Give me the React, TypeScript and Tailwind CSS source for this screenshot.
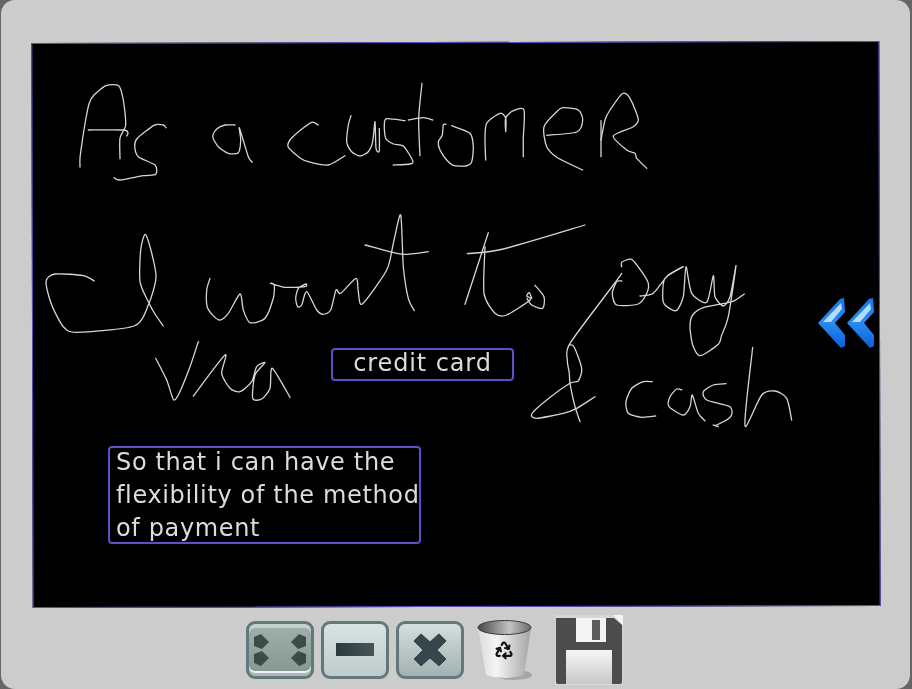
import { Recycle } from "lucide-react";

const strokes: string[] = [
  "80,167 80,158 82.7,138 86,118 89.3,103 94,95 106,85.7 118.7,85.7 123.3,100 125.7,125 120,138 120,158.7",
  "88.3,130 123.3,130 128,133 126.7,136",
  "166,127.7 163.3,125 154,125.3 137.3,138.3 134.7,146 138.3,156.7 155,165 155.7,174.3 143.3,175.7 120,180 114,177.7",
  "235,125 225,125 216.7,129 212.7,136.7 218.3,146.7 228.3,153.3 238.3,152.7 240.7,140 239.3,127.7 248.3,156.7 252.3,162.3",
  "318.3,125 311.7,122.3 300,130.5 290,140 288.3,147.3 300,158 308.3,161.7 328.3,165 345,155.7",
  "351,115.7 348.3,125 346.7,141.7 351.7,151.7 360,156 368.3,151.7 372.7,141.7 375,121.7 376,148.3 379.3,150.7 379.3,128.3",
  "405,120.7 386.7,118.7 384.3,125 385.7,138.3 393.3,144 403.3,146 412.7,160.7 410,164 393.3,165",
  "422,83.3 418.7,118.3 420,155.7",
  "408.3,120 423.3,117.7 432.7,120",
  "446,124.3 443.3,125 442.3,135 438.3,141.7 440,150 446.7,160 453.3,165.3 465.7,166 471.7,161.7 473.3,146.7 470,133.3 451.7,125.7",
  "485.7,160 485,140 486.7,123.3 500,113.3 505.7,118.3 505.7,131.7 505.7,118 513.3,110.7 524,110 523.3,138.3 523.3,156.7",
  "546.7,135.3 576.7,132 582.7,120 578.3,110 563.3,107.7 556.7,111.7 544,126.7 546.7,146.7 558.3,158.3 582.7,170",
  "601,120.7 601,156.7",
  "601,140 605,120 610,110 622.3,93.7 630,98.3 638.3,119.3 633.3,126.7 613.3,136 626.7,150 635,153.3 636.7,158.3 646.7,168.3",
  "94.3,281 83.3,275.7 55,274 46,281.7 51.7,305 63.3,326.7 76.7,332.3 134,326 148.3,305 156,276.7 150,246.7 145,234.3 140.7,250 140,281.7 148.3,301.7 155,314 163.3,326",
  "210,278.3 206.7,290 207.7,308.3 219,320 228.3,313.3 240,294 243.3,310 250,322.7 265,318.3 273.3,298.3 274.3,285 270.7,283.3 285,287.3 305,286.7 306,284 298.3,288.3 295.7,298.3 297.7,306.7 301.7,305 306.7,291.7 316.7,310 323.3,314.3 330.7,310 336,290 340.7,293.3 356,278.3 358.3,291.7 362.3,304 386.7,270 393.3,243.3 400.7,215 403.3,266.7 408.3,298.3 414.3,310.7",
  "365,245 390,251.7 405,254.3 428.3,251.7",
  "155.7,358.3 166.7,380 173.3,399.3 178.3,395 190,366.7 198.3,341.7",
  "193.3,396 225,355 221.7,373.3 230,388.3 240,391.7 251.7,381.7 256.7,366.7 265,362.7 255,375 252.7,398.3 261.7,399 270,388.3 272.3,368.3 290,397.3",
  "488.3,232.7 465,304.3",
  "467.3,253.7 503.3,249 585,225",
  "485,246.7 484,293.3 495,313.3 506.7,315 530,300 526.7,296 529.3,292.7 531.7,298.3",
  "535,285.3 544,296.7 542.7,308.3 531.7,305 527,298.3",
  "621.7,273.3 613.3,285 570,343.3 567.3,360 569.3,373.3 570,383.3 575,406.7 580,421.7",
  "569.3,345 574,346.7 581.7,368.3 578.3,381 570,383.3 546.7,400 531.7,414 536.7,418.3 563.3,413.3 576.7,408.3 595,396.7",
  "621.7,266.7 621.7,262.3 631.7,259.3 641.7,271.7 648.3,283.3 646.7,293.3 638.3,304 616.7,305 612.3,293.3 616.7,281.7 621.7,281",
  "640,296 653.3,293.3 668.3,275 683.3,266.7 665,278.3 662.7,296.7 665,305 676,310.7 683.3,296.7 686,266.7 691.7,293.3 706.7,302.3 713.3,275.7 715,296.7 723.3,306 730,296.7 736,265.7 728.3,316.7 721.7,335 718.3,344.3 700,355.7 692.7,345 690,326.7 692.7,315 703.3,307.7 731.7,301.7 744.3,294",
  "652.3,381.7 643.3,381.7 631.7,388.3 626,401.7 628.3,413.3 641.7,417.3 655.7,416",
  "681.7,390 676.7,389 670,396.7 669,406.7 683.3,415 690,406.7 692.3,395 698.3,413.3 705,420.7",
  "726,383.7 713.3,385 703.3,391.7 706.7,400 730,406.7 730.7,416.7 716.7,425 713.3,425 718.3,426.7",
  "752.7,347.3 746.7,400 745.7,426.7 761.7,395 775,391 786.7,398.3 791.7,420",
];

// Catmull-Rom smoothing with low tension so that sharp pen turns stay sharp
function smooth(line: string): string {
  const p = line.split(" ").map((s) => s.split(",").map(Number));
  let d = `M${p[0][0]} ${p[0][1]}`;
  const k = 1 / 8;
  for (let i = 0; i < p.length - 1; i++) {
    const a = p[Math.max(i - 1, 0)];
    const b = p[i];
    const c = p[i + 1];
    const e = p[Math.min(i + 2, p.length - 1)];
    const c1x = b[0] + (c[0] - a[0]) * k;
    const c1y = b[1] + (c[1] - a[1]) * k;
    const c2x = c[0] - (e[0] - b[0]) * k;
    const c2y = c[1] - (e[1] - b[1]) * k;
    d += ` C${c1x.toFixed(1)} ${c1y.toFixed(1)} ${c2x.toFixed(1)} ${c2y.toFixed(1)} ${c[0]} ${c[1]}`;
  }
  return d;
}

function Handwriting() {
  return (
    <svg className="absolute inset-0 w-full h-full" viewBox="31 42 849 565" fill="none">
      {strokes.map((p, i) => (
        <path key={i} d={smooth(p)} stroke="#d6d6d6" strokeWidth="1.3" strokeLinejoin="round" strokeLinecap="round" />
      ))}
    </svg>
  );
}

function Chevrons() {
  const shape = (dx: number) =>
    `${818 + dx},323 ${840 + dx},299 ${844 + dx},298 ${845 + dx},312 ${835 + dx},323 ${845 + dx},335 ${845 + dx},346 ${841 + dx},348`;
  const shine = (dx: number) =>
    `${823 + dx},322 ${841 + dx},303 ${842 + dx},309 ${831 + dx},322`;
  return (
    <svg className="absolute left-[785px] top-[254px] w-[64px] h-[54px] blur-[0.4px]" viewBox="816 296 64 54">
      <defs>
        <linearGradient id="chev" x1="0" y1="0" x2="0" y2="1">
          <stop offset="0" stopColor="#1a78e6" />
          <stop offset="0.5" stopColor="#2a8af4" />
          <stop offset="1" stopColor="#0a5fd8" />
        </linearGradient>
      </defs>
      <polygon points={shape(0)} fill="url(#chev)" />
      <polygon points={shine(0)} fill="#b4dcff" />
      <polygon points={shape(29)} fill="url(#chev)" />
      <polygon points={shine(29)} fill="#b4dcff" />
    </svg>
  );
}

function GlyphExpand() {
  return (
    <svg width="52" height="32" viewBox="0 0 52 32" className="blur-[0.4px]">
      <path d="M0 3 L7 0 L15 8 L8 15 L0 12 Z" fill="#3c4a4a" />
      <path d="M52 3 L45 0 L37 8 L44 15 L52 12 Z" fill="#3c4a4a" />
      <path d="M0 29 L7 32 L15 24 L8 17 L0 20 Z" fill="#3c4a4a" />
      <path d="M52 29 L45 32 L37 24 L44 17 L52 20 Z" fill="#3c4a4a" />
    </svg>
  );
}

function GlyphMinus() {
  return (
    <svg width="38" height="14" viewBox="0 0 38 14" className="blur-[0.3px]">
      <defs>
        <linearGradient id="bar" x1="0" y1="0" x2="1" y2="0">
          <stop offset="0" stopColor="#2c3a3c" />
          <stop offset="1" stopColor="#465658" />
        </linearGradient>
      </defs>
      <rect x="0" y="0" width="38" height="13" fill="url(#bar)" />
    </svg>
  );
}

function GlyphClose() {
  return (
    <svg width="36" height="36" viewBox="0 0 36 36" className="blur-[0.3px]">
      <path d="M9 1 L18 9 L27 1 L35 9 L26 18 L35 27 L27 35 L18 27 L9 35 L1 27 L10 18 L1 9 Z" fill="#36464a" stroke="#e2e8e8" strokeWidth="0.6" />
    </svg>
  );
}

function Trash() {
  return (
    <svg width="56" height="66" viewBox="0 0 56 66" className="blur-[0.3px]">
      <defs>
        <linearGradient id="can" x1="0" y1="0" x2="1" y2="0">
          <stop offset="0" stopColor="#dcdcdc" />
          <stop offset="0.35" stopColor="#f4f4f4" />
          <stop offset="1" stopColor="#a4a4a4" />
        </linearGradient>
        <linearGradient id="canIn" x1="0" y1="0" x2="1" y2="0">
          <stop offset="0" stopColor="#484848" />
          <stop offset="0.6" stopColor="#c4c4c4" />
          <stop offset="1" stopColor="#6a6a6a" />
        </linearGradient>
      </defs>
      <ellipse cx="37" cy="58" rx="18" ry="5" fill="#a6a6a6" />
      <path d="M1 11 L9 58 Q27 64 47 58 L54 11 Z" fill="url(#can)" />
      <ellipse cx="27.5" cy="10.5" rx="26.5" ry="7" fill="url(#canIn)" stroke="#3a3a3a" strokeWidth="1" />
    </svg>
  );
}

function Floppy() {
  return (
    <svg width="68" height="70" viewBox="0 0 68 70" className="blur-[0.3px]">
      <defs>
        <linearGradient id="flop" x1="0" y1="0" x2="0" y2="1">
          <stop offset="0" stopColor="#f6f6f6" />
          <stop offset="1" stopColor="#c8c8c8" />
        </linearGradient>
      </defs>
      <rect x="0" y="0" width="68" height="70" fill="#d6d6d6" />
      <path d="M58 0 L68 0 L68 10 Z" fill="#f4f4f4" />
      <path d="M1 3 L59 3 L67 10 L67 67 Q67 69 65 69 L3 69 Q1 69 1 67 Z" fill="#4c4c4c" />
      <rect x="21" y="3" width="30" height="24" fill="#f4f4f4" />
      <rect x="37" y="5" width="8" height="20" fill="#5c5c5c" />
      <rect x="11" y="35" width="46" height="34" fill="url(#flop)" />
    </svg>
  );
}

export default function App() {
  const font = { fontFamily: '"DejaVu Sans", sans-serif' };
  return (
    <div className="w-[912px] h-[689px] bg-[#666666] overflow-hidden">
      <div className="ml-px w-[909px] h-full rounded-[14px] bg-[#cccccc] pt-[42px]">
        <div className="relative ml-[30px] w-[849px] h-[565px]">
          <div className="absolute inset-y-0 left-px right-0 bg-black border border-[#5e50c4] -rotate-[0.135deg]" />
          <Handwriting />
          <div
            style={font}
            className="absolute left-[300px] top-[306px] w-[183px] h-[33px] border-2 border-[#5e50c4] rounded-[4px] flex items-center justify-center pb-[3px] text-[24px] leading-[28px] tracking-[0.9px] text-[#dcdcdc] whitespace-nowrap"
          >
            <span className="blur-[0.4px]">credit card</span>
          </div>
          <div
            style={font}
            className="absolute left-[77px] top-[404px] w-[313px] h-[98px] border-2 border-[#5e50c4] rounded-[4px] pl-[6px] text-[24px] leading-[33px] tracking-[0.65px] text-[#dcdcdc] whitespace-nowrap"
          >
            <div className="-mt-[2px] blur-[0.4px]">
              <div>So that i can have the</div>
              <div>flexibility of the method</div>
              <div>of payment</div>
            </div>
          </div>
          <Chevrons />
        </div>
        <div className="h-[85px] pl-[245px] flex items-center">
          <button className="w-[68px] h-[58px] rounded-[9px] border-[3px] border-[#64777a] bg-gradient-to-b from-[#9fb0aa] to-[#84988f] flex items-center justify-center shadow-[inset_0_4px_0_#c4d0d0,inset_0_-3px_0_#aab8b8,inset_0_-5px_0_#eef2f2]">
            <GlyphExpand />
          </button>
          <button className="ml-[7px] w-[68px] h-[58px] rounded-[9px] border-[3px] border-[#64777a] bg-gradient-to-b from-[#d8e2e2] to-[#c0cccc] flex items-center justify-center">
            <GlyphMinus />
          </button>
          <button className="ml-[7px] w-[68px] h-[58px] rounded-[9px] border-[3px] border-[#64777a] bg-gradient-to-b from-[#d4dede] to-[#a2b2b0] flex items-center justify-center">
            <GlyphClose />
          </button>
          <div className="relative ml-[13px] w-[56px] h-[66px]">
            <Trash />
            <Recycle className="absolute left-[17px] top-[23px]" size={20} color="#111111" strokeWidth={2.6} />
          </div>
          <div className="ml-[22px]">
            <Floppy />
          </div>
        </div>
      </div>
    </div>
  );
}
